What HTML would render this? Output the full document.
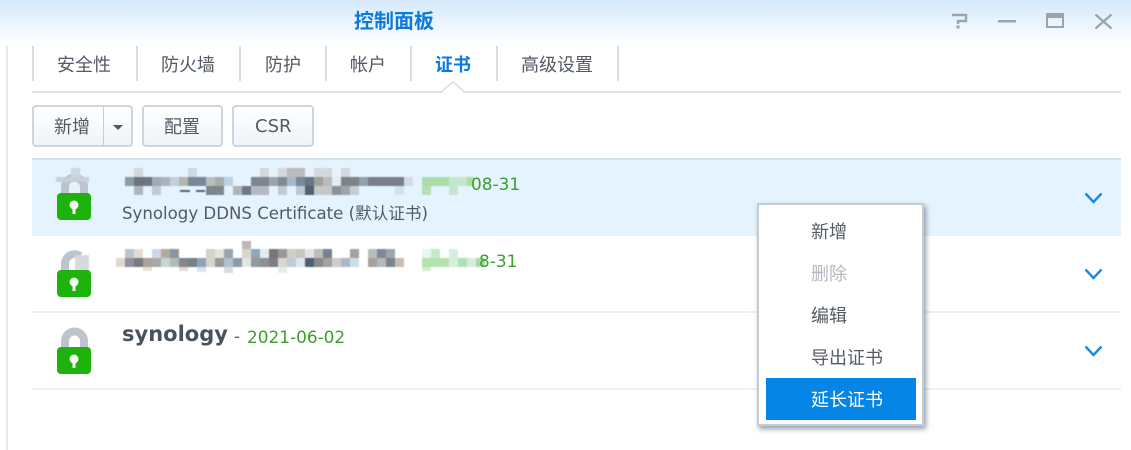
<!DOCTYPE html>
<html>
<head>
<meta charset="utf-8">
<style>
html,body{margin:0;padding:0;background:#fff}
#p{position:relative;width:1131px;height:450px;overflow:hidden;background:#fff;font-family:"DejaVu Sans","Noto Sans CJK SC",sans-serif;color:#525a64}
#p div,#p span.a{position:absolute}
.t{white-space:nowrap;font-family:"Liberation Sans","Noto Sans CJK SC",sans-serif;font-size:18px;line-height:24px}
.d{width:2px;top:46px;height:35px;background:#d5dce3}
.b{box-sizing:border-box;top:105px;height:42px;border:2px solid #cdd6df;border-radius:4px;background:linear-gradient(#fff,#eff4f8)}
.m{left:811px;white-space:nowrap;font-family:"Liberation Sans","Noto Sans CJK SC",sans-serif;font-size:18px;line-height:24px;color:#555c64}
.l{white-space:nowrap;font-size:16.6px;line-height:22px;color:#525a64}
.g{color:#3aa02a;font-size:16.9px}
svg{position:absolute;left:0;top:0}
.bl{filter:blur(0.6px)}
</style>
</head>
<body>
<div id="p">
<div style="left:0;top:0;width:1131px;height:44px;background:linear-gradient(#d3e8fa,#ffffff)"></div>
<div style="left:6px;top:46px;width:2px;height:404px;background:#e4e8ec"></div>
<div class="t" style="left:354px;top:10px;font-size:20px;font-weight:bold;color:#0a7bdc">控制面板</div>

<div class="d" style="left:32px"></div><div class="d" style="left:136px"></div><div class="d" style="left:239px"></div><div class="d" style="left:325px"></div><div class="d" style="left:410px"></div><div class="d" style="left:496px"></div><div class="d" style="left:617px"></div>
<div class="t" style="left:57px;top:53px">安全性</div>
<div class="t" style="left:161px;top:53px">防火墙</div>
<div class="t" style="left:265px;top:53px">防护</div>
<div class="t" style="left:350px;top:53px">帐户</div>
<div class="t" style="left:435px;top:53px;font-weight:bold;color:#0a7bdc">证书</div>
<div class="t" style="left:521px;top:53px">高级设置</div>
<div style="left:32px;top:91px;width:1089px;height:2px;background:#dfe3e6"></div>

<div class="b" style="left:32px;width:101px"></div>
<div style="left:103px;top:107px;width:1px;height:38px;background:#c5ced7"></div>
<div class="t" style="left:54px;top:115px">新增</div>
<div style="left:113px;top:125px;width:0;height:0;border-left:5px solid transparent;border-right:5px solid transparent;border-top:5px solid #4e5660"></div>
<div class="b" style="left:142px;width:81px"></div>
<div class="t" style="left:164px;top:115px">配置</div>
<div class="b" style="left:232px;width:82px"></div>
<div class="t" style="left:255px;top:115px;font-family:'DejaVu Sans',sans-serif;font-size:18px">CSR</div>

<div style="left:32px;top:158px;width:1089px;height:78px;background:#e5f3fe"></div>
<div style="left:32px;top:158px;width:1089px;height:2px;background:#d3e2ed"></div>
<div style="left:32px;top:311px;width:1089px;height:2px;background:#eef0f2"></div>
<div style="left:32px;top:388px;width:1089px;height:2px;background:#eef0f2"></div>

<svg width="1131" height="450" viewBox="0 0 1131 450">
<!-- tab arrow -->
<path d="M441 92L453 82L465 92" fill="#fff" stroke="#dfe3e6" stroke-width="2"/>
<rect x="443" y="91" width="20" height="2" fill="#fff"/>
<!-- window controls -->
<path d="M952 15H966V21H958V24" fill="none" stroke="#9ba4ab" stroke-width="2.4"/>
<rect x="956.500" y="25.500" width="3" height="3" fill="#9ba4ab"/>
<rect x="998" y="20" width="18" height="2.500" fill="#9ba4ab"/>
<path d="M1046 13H1064V28H1046ZM1048 18V26H1062V18Z" fill="#9ba4ab" fill-rule="evenodd"/>
<path d="M1095.500 14.500L1111.500 28.500M1111.500 14.500L1095.500 28.500" stroke="#9ba4ab" stroke-width="2.200"/>
<!-- locks -->
<g fill="none" stroke="#bcc5cf" stroke-width="8">
<path d="M65 195V187A9.500 9.500 0 0 1 84 187V195"/>
<path d="M65 272V264A9.500 9.500 0 0 1 80 256"/>
<path d="M65 349V341A9.500 9.500 0 0 1 84 341V349"/>
</g>
<g class="bl">
<!-- row 1 lock blur -->
<rect x="71" y="168" width="9" height="9" fill="#cfd7df"/>
<rect x="56" y="177" width="33" height="5" fill="#c8d0d8"/>
<!-- row 2 lock blur -->
<rect x="75" y="255" width="14" height="16" fill="#d6dae0"/>
</g>
<g fill="#1db20c">
<rect x="57" y="193" width="34" height="27" rx="4"/>
<rect x="57" y="270" width="34" height="27" rx="4"/>
<rect x="57" y="347" width="34" height="27" rx="4"/>
</g>
<g fill="#f2fbef">
<circle cx="74" cy="205" r="4.500"/><rect x="72.500" y="205" width="3" height="9"/>
<circle cx="74" cy="282" r="4.500"/><rect x="72.500" y="282" width="3" height="9"/>
<circle cx="74" cy="359" r="4.500"/><rect x="72.500" y="359" width="3" height="9"/>
</g>
<!-- row 1 blur -->
<g class="bl">
<path fill="#d3d8de" d="M134 168h9v9h-9zM188 168h9v9h-9zM260 168h9v9h-9zM278 168h9v9h-9zM314 168h18v9h-18zM341 168h9v9h-9z"/>
<path fill="#b8babb" d="M287 168h18v9h-18z"/>
<path fill="#8f9ba5" d="M125 177h9v9h-9z"/>
<path fill="#6f7580" d="M134 177h18v9h-18z"/>
<path fill="#a0aab5" d="M152 177h9v9h-9z"/>
<path fill="#a9b2c0" d="M161 177h9v9h-9z"/>
<path fill="#c5cdd6" d="M170 177h9v9h-9z"/>
<path fill="#b5b5b0" d="M179 177h9v9h-9z"/>
<path fill="#78889a" d="M188 177h18v9h-18zM296 177h9v9h-9z"/>
<path fill="#b8bdc0" d="M206 177h9v9h-9z"/>
<path fill="#aaaca8" d="M215 177h9v9h-9z"/>
<path fill="#bdd3e2" d="M224 177h9v9h-9z"/>
<path fill="#7f8590" d="M251 177h18v9h-18z"/>
<path fill="#a0a2a5" d="M269 177h9v9h-9z"/>
<path fill="#808a95" d="M278 177h9v9h-9z"/>
<path fill="#a8b8cc" d="M287 177h9v9h-9z"/>
<path fill="#6a7480" d="M305 177h9v9h-9z"/>
<path fill="#a0a09c" d="M314 177h9v9h-9z"/>
<path fill="#b9bcbc" d="M323 177h9v9h-9z"/>
<path fill="#e3ecf3" d="M332 177h9v9h-9z"/>
<path fill="#7d828c" d="M341 177h18v9h-18z"/>
<path fill="#95a0ad" d="M359 177h9v9h-9z"/>
<path fill="#7a7f8a" d="M368 177h36v9h-36z"/>
<path fill="#d4dbe6" d="M404 177h9v9h-9z"/>
<path fill="#b0b5bb" d="M134 186h9v9h-9z"/>
<path fill="#c0cad5" d="M152 186h9v9h-9z"/>
<path fill="#7f858c" d="M206 186h18v9h-18z"/>
<path fill="#b0b5b8" d="M233 186h9v9h-9z"/>
<path fill="#6f7885" d="M242 186h9v9h-9z"/>
<path fill="#b5b9c0" d="M251 186h18v9h-18z"/>
<path fill="#bfcad5" d="M278 186h9v9h-9z"/>
<path fill="#bec8cc" d="M296 186h9v9h-9z"/>
<path fill="#4f6074" d="M305 186h9v9h-9z"/>
<path fill="#c4c8c8" d="M314 186h18v9h-18z"/>
<path fill="#8a9299" d="M332 186h9v9h-9z"/>
<path fill="#a0a5aa" d="M341 186h9v9h-9z"/>
<path fill="#c8ccd0" d="M350 186h9v9h-9z"/>
<path fill="#cfe2f0" d="M395 186h9v9h-9z"/>
<path fill="#556070" d="M180 190h10v2h-10zM196 190h9v2h-9z"/>
<path fill="#a9dca9" d="M422 177h27v9h-27z"/>
<path fill="#c5e8cc" d="M449 177h18v9h-18z"/>
<path fill="#a8e0a0" d="M467 177h7v9h-7z"/>
<path fill="#b5e0b5" d="M422 186h9v9h-9z"/>
<path fill="#c5e6cc" d="M449 186h9v9h-9z"/>
</g>
<!-- row 2 blur -->
<g class="bl">
<path fill="#bfb6b5" d="M242 241h9v8h-9z"/>
<path fill="#bcc5ce" d="M125 249h9v9h-9z"/>
<path fill="#e5dcd0" d="M134 249h9v9h-9z"/>
<path fill="#ced7e4" d="M152 249h9v9h-9z"/>
<path fill="#b0aaa5" d="M161 249h9v9h-9z"/>
<path fill="#8996a3" d="M170 249h9v9h-9z"/>
<path fill="#d5d2c8" d="M206 249h9v9h-9z"/>
<path fill="#e5e5de" d="M215 249h9v9h-9z"/>
<path fill="#97a3ad" d="M224 249h9v9h-9z"/>
<path fill="#dad5cc" d="M242 249h9v9h-9z"/>
<path fill="#8fa8b8" d="M251 249h9v9h-9z"/>
<path fill="#e0ecf2" d="M260 249h9v9h-9z"/>
<path fill="#777" d="M269 249h9v9h-9z"/>
<path fill="#999" d="M278 249h9v9h-9z"/>
<path fill="#d0ceca" d="M287 249h9v9h-9z"/>
<path fill="#c8c5be" d="M296 249h9v9h-9z"/>
<path fill="#e0e4e6" d="M305 249h9v9h-9z"/>
<path fill="#bbb" d="M314 249h9v9h-9zM368 249h9v9h-9z"/>
<path fill="#778290" d="M323 249h9v9h-9z"/>
<path fill="#a8a09c" d="M350 249h9v9h-9zM368 258h9v9h-9z"/>
<path fill="#7f8a96" d="M377 249h9v9h-9z"/>
<path fill="#9fa5a9" d="M386 249h9v9h-9z"/>
<path fill="#e0d8d0" d="M116 258h9v9h-9z"/>
<path fill="#8f9299" d="M125 258h9v9h-9z"/>
<path fill="#777a80" d="M134 258h9v9h-9z"/>
<path fill="#aaa29c" d="M143 258h9v9h-9z"/>
<path fill="#aaa8a4" d="M152 258h9v9h-9z"/>
<path fill="#c8d5d5" d="M161 258h9v9h-9z"/>
<path fill="#b0bcb8" d="M170 258h9v9h-9z"/>
<path fill="#85868a" d="M179 258h9v9h-9z"/>
<path fill="#75808c" d="M188 258h9v9h-9z"/>
<path fill="#8ea3bc" d="M197 258h9v9h-9z"/>
<path fill="#d5d5c8" d="M206 258h9v9h-9z"/>
<path fill="#999a98" d="M215 258h9v9h-9z"/>
<path fill="#b3c2cd" d="M224 258h9v9h-9z"/>
<path fill="#8f9aa8" d="M233 258h9v9h-9z"/>
<path fill="#dfe8e8" d="M242 258h9v9h-9z"/>
<path fill="#949a9c" d="M251 258h9v9h-9z"/>
<path fill="#8f9090" d="M260 258h9v9h-9z"/>
<path fill="#7d7d82" d="M269 258h9v9h-9z"/>
<path fill="#dcd5cc" d="M278 258h9v9h-9z"/>
<path fill="#c0ccd5" d="M287 258h9v9h-9z"/>
<path fill="#dce6ed" d="M296 258h9v9h-9z"/>
<path fill="#4f6074" d="M305 258h9v9h-9z"/>
<path fill="#8c8a8c" d="M314 258h9v9h-9z"/>
<path fill="#a5a0a2" d="M323 258h9v9h-9z"/>
<path fill="#d0ccc8" d="M332 258h9v9h-9z"/>
<path fill="#a8b8c8" d="M341 258h9v9h-9z"/>
<path fill="#d0dce6" d="M350 258h9v9h-9z"/>
<path fill="#b8b8ba" d="M377 258h9v9h-9z"/>
<path fill="#788694" d="M386 258h9v9h-9z"/>
<path fill="#c8bdb0" d="M395 258h9v9h-9z"/>
<path fill="#e8e0d8" d="M143 267h9v4h-9z"/>
<path fill="#e0dcd5" d="M179 267h9v4h-9z"/>
<path fill="#dbe5ea" d="M197 267h9v5h-9z"/>
<path fill="#d8dde4" d="M224 267h9v6h-9z"/>
<path fill="#e5ecef" d="M278 267h9v6h-9z"/>
<path fill="#e8f6ec" d="M422 249h9v9h-9z"/>
<path fill="#c5ebc5" d="M431 249h9v9h-9z"/>
<path fill="#d4eedd" d="M449 249h9v9h-9z"/>
<path fill="#b5e3ad" d="M422 258h27v9h-27z"/>
<path fill="#d8f0da" d="M449 258h9v9h-9z"/>
<path fill="#b0e0b8" d="M458 258h9v9h-9z"/>
<path fill="#d8ecd6" d="M467 258h9v9h-9z"/>
<path fill="#a4dca8" d="M476 258h9v9h-9z"/>
<path fill="#d0edd0" d="M422 267h9v4h-9z"/>
</g>
<!-- chevrons -->
<g fill="none" stroke="#1e88d8" stroke-width="2.400">
<path d="M1085.500 193.500L1093.500 202L1101.500 193.500"/>
<path d="M1085.500 269.500L1093.500 278L1101.500 269.500"/>
<path d="M1085.500 346.500L1093.500 355L1101.500 346.500"/>
</g>
</svg>

<div class="l g" style="left:471px;top:173px">08-31</div>
<div class="l" style="left:122px;top:203px">Synology DDNS Certificate (默认证书)</div>
<div class="l g" style="left:479px;top:250px">8-31</div>
<div class="l" style="left:122px;top:321px;font-size:21px;line-height:26px;font-weight:bold;color:#4a5260">synology</div>
<div class="l" style="left:234px;top:326px">-</div>
<div class="l g" style="left:247px;top:326px">2021-06-02</div>

<div style="box-sizing:border-box;left:757px;top:203px;width:167px;height:223px;background:#fff;border:2px solid #c4ccd3;box-shadow:2px 3px 5px rgba(90,105,120,.65)"></div>
<div class="m" style="top:220px">新增</div>
<div class="m" style="top:262px;color:#b4b9bf">删除</div>
<div class="m" style="top:304px">编辑</div>
<div class="m" style="top:346px">导出证书</div>
<div style="left:766px;top:378px;width:150px;height:42px;background:#0586e6"></div>
<div class="m" style="top:388px;color:#fff">延长证书</div>
</div>
</body>
</html>
